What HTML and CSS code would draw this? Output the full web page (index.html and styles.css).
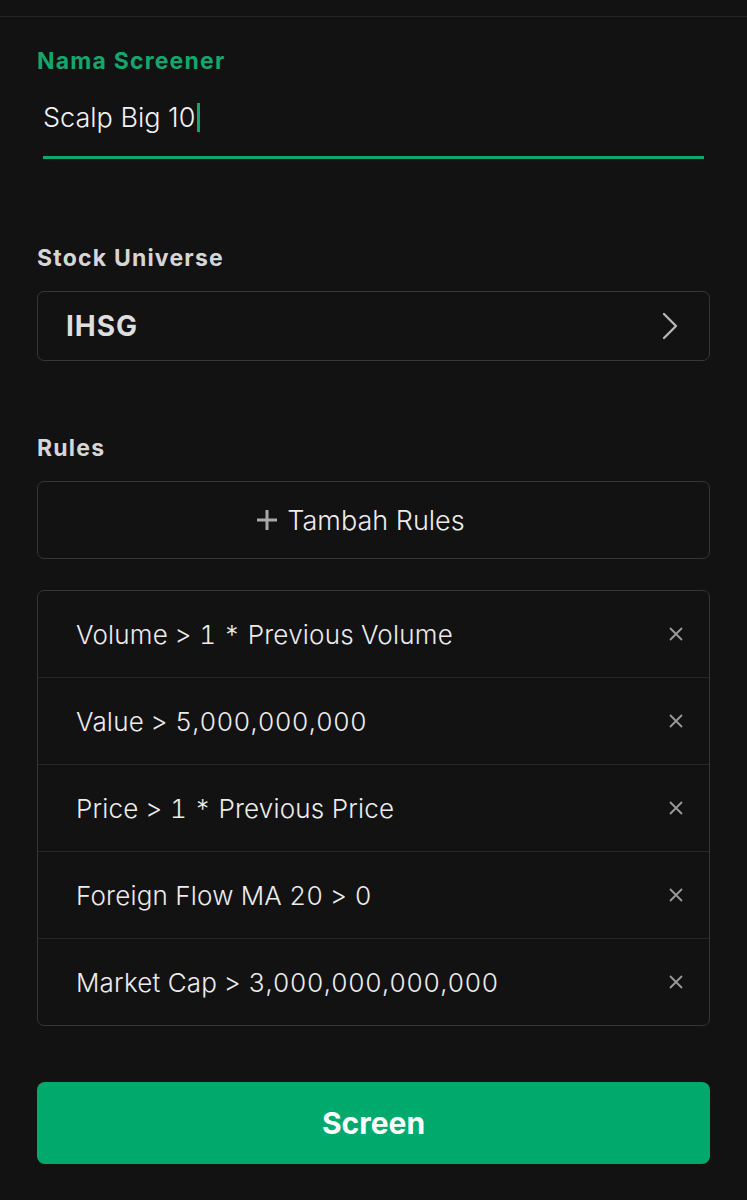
FILE: index.html
```html
<!DOCTYPE html>
<html lang="id">
<head>
    <meta charset="UTF-8">
    <meta name="viewport" content="width=device-width, initial-scale=1.0">
    <title>Screener</title>
    <link rel="stylesheet" href="styles.css">
</head>
<body>
    <div class="topbar"></div>

    <div class="page">
        <div class="field name-field">
            <label class="label label-active">Nama Screener</label>
            <div class="name-input">
                <span>Scalp Big 10</span><span class="caret"></span>
            </div>
        </div>

        <div class="field">
            <label class="label">Stock Universe</label>
            <div class="select">
                <span>IHSG</span>
                <svg class="chevron" width="18" height="30" viewBox="0 0 18 30">
                    <path d="M3 3 L15 15 L3 27" fill="none" stroke="#b5b5b5" stroke-width="2.4" stroke-linecap="round" stroke-linejoin="round"/>
                </svg>
            </div>
        </div>

        <div class="field rules-field">
            <label class="label">Rules</label>
            <button class="add-btn">
                <svg width="22" height="22" viewBox="0 0 22 22">
                    <path d="M11 1 V21 M1 11 H21" stroke="#a8a8a8" stroke-width="3"/>
                </svg>
                <span>Tambah Rules</span>
            </button>

            <div class="rules">
                <div class="rule"><span>Volume &gt; 1 * Previous Volume</span><svg class="remove" width="14" height="14" viewBox="0 0 14 14"><path d="M1 1 L13 13 M13 1 L1 13" stroke="#9a9a9a" stroke-width="1.8"/></svg></div>
                <div class="rule"><span>Value &gt; 5,000,000,000</span><svg class="remove" width="14" height="14" viewBox="0 0 14 14"><path d="M1 1 L13 13 M13 1 L1 13" stroke="#9a9a9a" stroke-width="1.8"/></svg></div>
                <div class="rule"><span>Price &gt; 1 * Previous Price</span><svg class="remove" width="14" height="14" viewBox="0 0 14 14"><path d="M1 1 L13 13 M13 1 L1 13" stroke="#9a9a9a" stroke-width="1.8"/></svg></div>
                <div class="rule"><span>Foreign Flow MA 20 &gt; 0</span><svg class="remove" width="14" height="14" viewBox="0 0 14 14"><path d="M1 1 L13 13 M13 1 L1 13" stroke="#9a9a9a" stroke-width="1.8"/></svg></div>
                <div class="rule"><span>Market Cap &gt; 3,000,000,000,000</span><svg class="remove" width="14" height="14" viewBox="0 0 14 14"><path d="M1 1 L13 13 M13 1 L1 13" stroke="#9a9a9a" stroke-width="1.8"/></svg></div>
            </div>
        </div>

        <button class="screen-btn">Screen</button>
    </div>
</body>
</html>
```

FILE: styles.css
```css
* {
    box-sizing: border-box;
}

body {
    margin: 0;
    background: #121212;
    color: #ececec;
    font-family: Inter, "Noto Sans", sans-serif;
}

.topbar {
    height: 17px;
    border-bottom: 1px solid #242424;
}

.page {
    padding: 30px 37px 0 37px;
}

.field {
    margin-bottom: 73px;
}

.name-field {
    margin-bottom: 85px;
}

.rules-field {
    margin-bottom: 56px;
}

.label {
    display: block;
    height: 28px;
    line-height: 28px;
    font-size: 23px;
    font-weight: 700;
    color: #d6d6d6;
    letter-spacing: 1.2px;
    margin-bottom: 19px;
}

.label-active {
    color: #16a56d;
    margin-bottom: 25px;
}

.name-input {
    margin: 0 6px;
    display: flex;
    align-items: center;
    height: 59px;
    padding-bottom: 22px;
    font-size: 27px;
    font-weight: 300;
    color: #f2f2f2;
    border-bottom: 3px solid #16a56d;
}

.caret {
    display: inline-block;
    width: 3px;
    height: 29px;
    background: #16a56d;
    margin-left: 2px;
}

.select {
    height: 70px;
    border: 1px solid #363636;
    border-radius: 7px;
    display: flex;
    align-items: center;
    justify-content: space-between;
    padding: 0 30px 0 28px;
    font-size: 28px;
    font-weight: 700;
    letter-spacing: 1px;
    color: #dedede;
}

.add-btn {
    width: 100%;
    height: 78px;
    background: transparent;
    border: 1px solid #363636;
    border-radius: 7px;
    color: #ececec;
    font-family: inherit;
    font-size: 27px;
    font-weight: 300;
    display: flex;
    align-items: center;
    justify-content: center;
    gap: 9px;
    padding-right: 32px;
    margin-bottom: 31px;
}

.rules {
    border: 1px solid #363636;
    border-radius: 7px;
}

.rule {
    height: 87px;
    display: flex;
    align-items: center;
    justify-content: space-between;
    padding: 0 26px 0 38px;
    font-size: 26px;
    font-weight: 300;
    letter-spacing: 0.2px;
    font-variant-numeric: tabular-nums;
    color: #ececec;
    border-top: 1px solid #262626;
}

.rule:first-child {
    border-top: none;
    height: 86px;
}

.screen-btn {
    width: 100%;
    height: 82px;
    background: #01a96c;
    border: none;
    border-radius: 8px;
    color: #ffffff;
    font-family: inherit;
    font-size: 30px;
    font-weight: 700;
}
```
